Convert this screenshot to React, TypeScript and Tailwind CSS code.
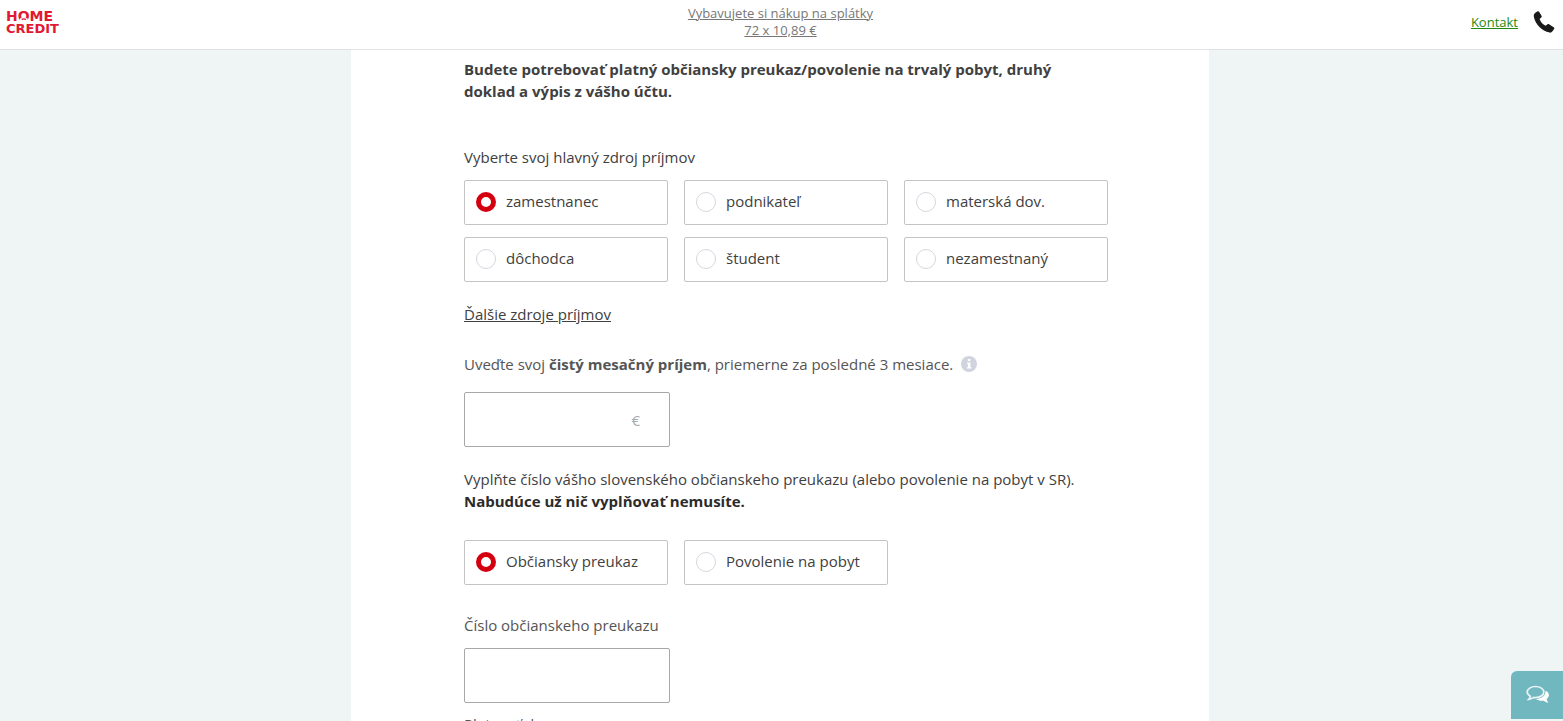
import { useState } from 'react';
import type { ReactNode } from 'react';

type RadioOption = {
  value: string;
  label: string;
};

type RadioCardsProps = {
  name: string;
  label: string;
  options: RadioOption[];
};

const incomeOptions: RadioOption[] = [
  { value: 'employee', label: 'zamestnanec' },
  { value: 'entrepreneur', label: 'podnikateľ' },
  { value: 'maternity', label: 'materská dov.' },
  { value: 'pensioner', label: 'dôchodca' },
  { value: 'student', label: 'študent' },
  { value: 'unemployed', label: 'nezamestnaný' },
];

const documentOptions: RadioOption[] = [
  { value: 'id-card', label: 'Občiansky preukaz' },
  { value: 'residence', label: 'Povolenie na pobyt' },
];

function Logo() {
  return (
    <svg width="60" height="29" viewBox="0 0 60 29" role="img" aria-label="Home Credit">
      <g fill="#e11931" fontFamily="'DejaVu Sans', sans-serif" fontWeight="700">
        <text x="0" y="11" fontSize="14">HOME</text>
        <text x="0" y="23" fontSize="13">CREDIT</text>
      </g>
      <path d="M14 8.200h7.600v3.400H14z" fill="#fff" />
      <path d="M15.800 9.700q2-1.600 4 0" fill="none" stroke="#e11931" strokeWidth="1.300" />
    </svg>
  );
}

function PhoneIcon() {
  return (
    <svg width="22" height="22" viewBox="0 0 22 22" fill="#1a1a1a" aria-hidden="true">
      <path d="M2.300 1.700 4.300.4c.6-.4 1.400-.3 1.800.3l2.400 4c.4.7.3 1.400-.3 1.900L6.600 7.900c.8 2.600 3.200 5.500 6 6.900l1.700-1.400c.5-.4 1.200-.5 1.700-.1l4.700 2.900c.6.4.8 1.200.4 1.800l-1.800 2.600c-.6.8-1.600 1.200-2.700 1C8.800 20.400 2.100 13 .8 5.600.6 4.100 1.100 2.600 2.300 1.700z" />
    </svg>
  );
}

function ChatIcon() {
  return (
    <svg width="24" height="20" viewBox="0 0 24 20" aria-hidden="true">
      <path d="M19.500 5.800c2.200 1 3.400 2.500 3.400 4.300 0 1.500-.8 2.800-2.200 3.800.2 1.500.8 2.700 1.900 3.600-1.900.1-3.500-.6-4.700-1.800-3.200.5-6.200-.3-7.900-1.700 5.500-.2 9.800-3.200 9.500-8.200z" fill="#fff" />
      <path d="M9.500 1.500c4.600 0 8.300 2.500 8.300 5.600s-3.700 5.600-8.300 5.600c-.8 0-1.500-.1-2.200-.2-1.300 1.200-2.900 1.900-4.600 1.900 1-.9 1.600-2 1.600-3.200C2.400 10.200 1.200 8.700 1.200 7.100c0-3.100 3.700-5.600 8.300-5.600z" fill="#70b7bf" stroke="#e8f5f6" strokeWidth="1.700" />
    </svg>
  );
}

function InfoIcon() {
  return (
    <svg width="16" height="16" viewBox="0 0 16 16" aria-hidden="true">
      <circle cx="8" cy="8" r="8" fill="#d0d4de" />
      <path d="M6.800 2.900h2.600v2.200H6.800zM6 6.400h3.400v4.800h1v1.400H5.900v-1.400h1V7.800H6z" fill="#fff" />
    </svg>
  );
}

function RadioCards({ name, label, options }: RadioCardsProps) {
  const [selected, setSelected] = useState(options[0].value);

  return (
    <div role="radiogroup" aria-label={label} className="grid grid-cols-3 gap-x-4 gap-y-3">
      {options.map((option) => (
        <label
          key={option.value}
          className="flex h-[45px] cursor-pointer items-center gap-2.5 rounded-xs border border-[#c4c4c4] px-[11px] pb-0.5"
        >
          <input
            type="radio"
            name={name}
            value={option.value}
            checked={selected === option.value}
            onChange={() => setSelected(option.value)}
            className="size-5 shrink-0 appearance-none rounded-full border border-[#d6d6e0] bg-white checked:border-[5px] checked:border-[#d5000f]"
          />
          <span className="pb-0.5">{option.label}</span>
        </label>
      ))}
    </div>
  );
}

function TextField({ id, children }: { id: string; children?: ReactNode }) {
  return (
    <div className="flex h-[55px] w-[206px] items-center rounded-xs border border-[#a8a8a8] pr-[29px]">
      <input id={id} type="text" className="h-full min-w-0 flex-1 bg-transparent px-4 outline-none" />
      {children}
    </div>
  );
}

export default function App() {
  return (
    <div className="flex h-screen flex-col overflow-hidden bg-[#eff4f5] font-['Open_Sans',sans-serif] text-[15px] leading-[22px] text-[#404040]">
      <header className="grid h-[50px] shrink-0 grid-cols-3 items-center border-b border-[#dfe3e4] bg-white pr-2 pl-1.5 text-[13px]">
        <Logo />
        <a href="#calculator" className="pb-1.5 text-center leading-[17px] text-[#777] underline">
          Vybavujete si nákup na splátky
          <br />
          72 x 10,89 €
        </a>
        <div className="flex items-center justify-end gap-[15px] pb-[5px]">
          <a href="#contact" className="text-[#1f8a0f] underline">Kontakt</a>
          <a href="tel:" aria-label="Telefón"><PhoneIcon /></a>
        </div>
      </header>

      <main className="min-h-0 flex-1 overflow-hidden pr-[3px]">
        <form className="mx-auto min-h-full max-w-[858px] bg-white pt-2 pr-[101px] pl-[113px]">
          <p className="font-bold">
            Budete potrebovať platný občiansky preukaz/povolenie na trvalý pobyt, druhý
            <br />
            doklad a výpis z vášho účtu.
          </p>

          <p className="mt-11 mb-3">Vyberte svoj hlavný zdroj príjmov</p>
          <RadioCards name="income" label="Hlavný zdroj príjmov" options={incomeOptions} />
          <a href="#more" className="mt-[21px] inline-block underline">Ďalšie zdroje príjmov</a>

          <div className="mt-7 mb-[17px] flex items-center gap-2 text-[#555]">
            <label htmlFor="income-amount">
              Uveďte svoj <strong>čistý mesačný príjem</strong>, priemerne za posledné 3 mesiace.
            </label>
            <button type="button" aria-label="Informácie"><InfoIcon /></button>
          </div>
          <TextField id="income-amount">
            <span className="text-[#aaa]">€</span>
          </TextField>

          <p className="mt-[21px] mb-7">
            Vyplňte číslo vášho slovenského občianskeho preukazu (alebo povolenie na pobyt v SR).
            <br />
            <strong className="text-[#2b2b2b]">Nabudúce už nič vyplňovať nemusíte.</strong>
          </p>
          <RadioCards name="document" label="Doklad" options={documentOptions} />

          <label htmlFor="card-number" className="mt-[29px] mb-3 block text-[#555]">Číslo občianskeho preukazu</label>
          <TextField id="card-number" />
          <p className="mt-2.5 text-[#555]">Platnosť do</p>
        </form>
      </main>

      <button
        type="button"
        aria-label="Chat"
        className="fixed right-0 bottom-0.5 flex h-12 w-[52px] items-center justify-center rounded-tl-md bg-[#70b7bf] pl-0.5"
      >
        <ChatIcon />
      </button>
    </div>
  );
}
